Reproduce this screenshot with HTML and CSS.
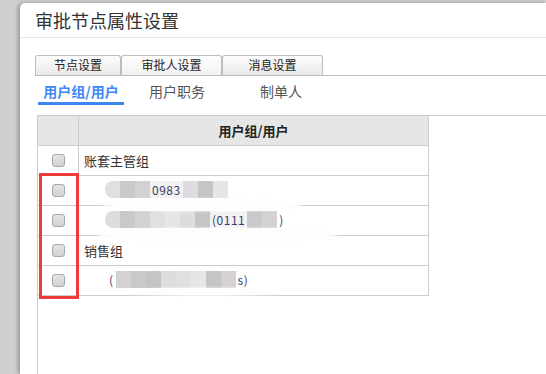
FILE: index.html
```html
<!DOCTYPE html>
<html lang="zh-CN">
<head>
<meta charset="utf-8">
<title>审批节点属性设置</title>
<link rel="stylesheet" href="styles.css">
</head>
<body>
<div class="page">
  <div class="dialog">
    <div class="title">审批节点属性设置</div>
    <div class="body">
      <div class="tabs">
        <div class="tab t1">节点设置</div>
        <div class="tab t2 active">审批人设置</div>
        <div class="tab t3">消息设置</div>
      </div>
      <div class="subtabs">
        <div class="sub s1 on">用户组/用户</div>
        <div class="sub s2">用户职务</div>
        <div class="sub s3">制单人</div>
      </div>
      <div class="pane">
        <div class="grid">
          <div class="row head">
            <div class="c1"></div>
            <div class="c2">用户组/用户</div>
          </div>
          <div class="row">
            <div class="c1"><span class="cb"></span></div>
            <div class="c2"><span class="name">账套主管组</span></div>
          </div>
          <div class="row">
            <div class="c1"><span class="cb"></span></div>
            <div class="c2 sub2">
              <span class="blur b-a">
                <i class="p1"></i><i class="p2"></i><i class="p3"></i><em>0983</em><i class="p4"></i><i class="p5"></i><i class="p6"></i>
              </span>
            </div>
          </div>
          <div class="row">
            <div class="c1"><span class="cb"></span></div>
            <div class="c2 sub2">
              <span class="blur b-b">
                <i class="p4"></i><i class="p2"></i><i class="p3"></i><i class="p1"></i><i class="p6"></i><i class="p4"></i><i class="p5"></i><em>(0111</em><i class="p2"></i><i class="p3"></i><em class="tail">)</em>
              </span>
            </div>
          </div>
          <div class="row">
            <div class="c1"><span class="cb"></span></div>
            <div class="c2"><span class="name">销售组</span></div>
          </div>
          <div class="row">
            <div class="c1"><span class="cb"></span></div>
            <div class="c2 sub3">
              <span class="blur b-c">
                <em class="lead">(</em><i class="p3"></i><i class="p2"></i><i class="p5"></i><i class="p4"></i><i class="p1"></i><i class="p6"></i><i class="p5"></i><i class="p3"></i><em class="tail">s)</em>
              </span>
            </div>
          </div>
        </div>
        <div class="smudge m1"></div>
        <div class="smudge m2"></div>
        <div class="smudge m3"></div>
        <div class="mark"></div>
      </div>
    </div>
  </div>
</div>
</body>
</html>
```

FILE: styles.css
```css
* { box-sizing: border-box; }

html, body {
  margin: 0;
  padding: 0;
  width: 546px;
  height: 374px;
  overflow: hidden;
  background: #cfcfcf;
  font-family: "Noto Sans CJK SC", "Liberation Sans", sans-serif;
  color: #333;
}

.page {
  display: flex;
  height: 374px;
  padding: 3px 0 0 20px;
}

.dialog {
  flex: 1;
  display: flex;
  flex-direction: column;
  background: #fff;
  border-radius: 5px 0 0 0;
  box-shadow: -2px 0 4px rgba(0, 0, 0, 0.28);
  overflow: hidden;
}

.title {
  height: 35px;
  padding-left: 15px;
  font-size: 18px;
  line-height: 34px;
  color: #333;
  border-bottom: 1px solid #e6e6e6;
}

.body {
  flex: 1;
  display: flex;
  flex-direction: column;
  padding: 17px 0 0 15px;
}

.tabs {
  display: flex;
  height: 21px;
  border-bottom: 1px solid #bcbcbc;
}

.tab {
  height: 20px;
  border: 1px solid #bcbcbc;
  border-bottom: none;
  border-radius: 3px 3px 0 0;
  background: linear-gradient(#fdfdfd, #e9e9e9);
  font-size: 12px;
  line-height: 18px;
  text-align: center;
  color: #222;
}

.tab.active { background: linear-gradient(#ffffff, #f1f1f1); }

.t1 { width: 86px; }
.t2 { width: 101px; }
.t3 { width: 101px; }

.subtabs {
  display: flex;
  margin-left: 3px;
  height: 29px;
}

.sub {
  padding-top: 4px;
  height: 29px;
  line-height: 22px;
  font-size: 14px;
  text-align: center;
  color: #555;
  border-bottom: 3px solid transparent;
}

.sub.on {
  color: #3d87f5;
  font-weight: bold;
  border-bottom-color: #3d87f5;
}

.s1 { width: 86px; }
.s2 { width: 106px; }
.s3 { width: 102px; }

.pane {
  position: relative;
  flex: 1;
  margin: 10px 0 0 2px;
  border-top: 1px solid #cccccc;
  border-left: 1px solid #cccccc;
}

.grid {
  width: 391px;
}

.row {
  display: grid;
  grid-template-columns: 41px 350px;
  height: 30px;
}

.row > div {
  height: 30px;
  border-bottom: 1px solid #cccccc;
  border-right: 1px solid #cccccc;
}

.row.head > div {
  height: 30px;
  background: #e6e6e6;
}

.row.head .c2 {
  justify-content: center;
  padding-left: 0;
  font-size: 13px;
  font-weight: bold;
  color: #222;
}

.c1 {
  display: flex;
  align-items: center;
  justify-content: center;
}

.cb {
  display: block;
  width: 13px;
  height: 13px;
  border: 1px solid #a8a8a8;
  border-radius: 3px;
  background: linear-gradient(#e4e4e4, #d2d2d2);
}

.c2 {
  display: flex;
  align-items: center;
  padding-left: 5px;
}

.name {
  font-size: 13px;
  color: #333;
}

.c2.sub2 { padding-left: 26px; }
.c2.sub3 { padding-left: 28px; }

.blur {
  display: flex;
  align-items: center;
  height: 17px;
  margin-top: -2px;
}

.blur i {
  display: block;
  width: 15px;
  height: 17px;
}

.blur em {
  font-style: normal;
  font-size: 12px;
  line-height: 17px;
  color: #3a3a6a;
  letter-spacing: 0.5px;
  padding: 0 2px;
  background: #f2f2f2;
}

.blur em.tail, .blur em.lead { background: transparent; }

.p1 { background: #e1dfe1; }
.p2 { background: #cbc8ca; }
.p3 { background: #d4d1d3; }
.p4 { background: #dedcde; }
.p5 { background: #c6c4c5; }
.p6 { background: #e7e6e6; }

.b-a i:first-child { border-radius: 8px 0 0 8px; }
.b-b i:first-child { border-radius: 8px 0 0 8px; }

.smudge {
  position: absolute;
  background: #fdfdfd;
  border-radius: 50%;
  filter: blur(1.5px);
}

.m1 { left: 64px; top: 83px; width: 200px; height: 12px; }
.m2 { left: 60px; top: 112px; width: 240px; height: 14px; }
.m3 { left: 92px; top: 172px; width: 150px; height: 8px; }

.mark {
  position: absolute;
  left: 1px;
  top: 57px;
  width: 40px;
  height: 126px;
  border: 3px solid #f03a3a;
}
```
